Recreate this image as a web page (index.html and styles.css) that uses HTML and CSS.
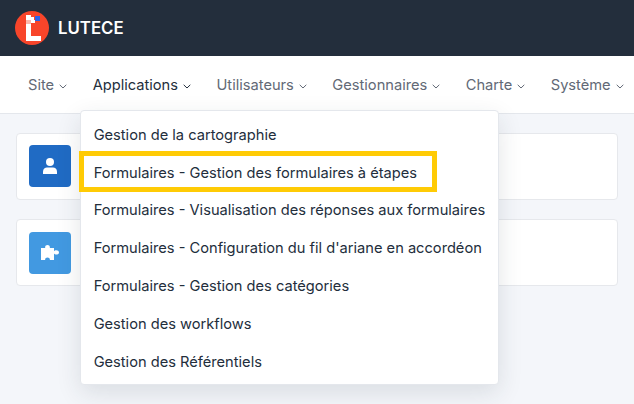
FILE: index.html
```html
<!DOCTYPE html>
<html lang="fr">
<head>
<meta charset="utf-8">
<title>Lutece</title>
<link rel="stylesheet" href="styles.css">
</head>
<body>
<header class="topbar">
  <svg class="logo" viewBox="0 0 34 34" width="34" height="34" aria-hidden="true">
    <circle cx="17" cy="17" r="17" fill="#f8452a"/>
    <path d="M11 4h5v5h-5zM16 6h3v3h-3zM16 9h4v3h-4zM11 13h5v12h10v5H11z" fill="#fff"/>
    <path d="M11 9h5v4h-5z" fill="#fbb9ad"/>
    <path d="M20 5h5v5h-5z" fill="#2b63e8"/>
  </svg>
  <span class="brand">LUTECE</span>
</header>
<nav class="nav">
  <a class="nav-item">Site<svg class="caret" viewBox="0 0 8 5"><path d="M.7.8 4 4l3.300-3.200"/></svg></a>
  <div class="nav-group">
    <a class="nav-item active">Applications<svg class="caret" viewBox="0 0 8 5"><path d="M.7.8 4 4l3.300-3.200"/></svg></a>
    <div class="menu">
      <a class="menu-item">Gestion de la cartographie</a>
      <a class="menu-item">Formulaires - Gestion des formulaires à étapes</a>
      <a class="menu-item">Formulaires - Visualisation des réponses aux formulaires</a>
      <a class="menu-item">Formulaires - Configuration du fil d'ariane en accordéon</a>
      <a class="menu-item">Formulaires - Gestion des catégories</a>
      <a class="menu-item">Gestion des workflows</a>
      <a class="menu-item">Gestion des Référentiels</a>
      <div class="highlight"></div>
    </div>
  </div>
  <a class="nav-item">Utilisateurs<svg class="caret" viewBox="0 0 8 5"><path d="M.7.8 4 4l3.300-3.200"/></svg></a>
  <a class="nav-item">Gestionnaires<svg class="caret" viewBox="0 0 8 5"><path d="M.7.8 4 4l3.300-3.200"/></svg></a>
  <a class="nav-item">Charte<svg class="caret" viewBox="0 0 8 5"><path d="M.7.8 4 4l3.300-3.200"/></svg></a>
  <a class="nav-item">Système<svg class="caret" viewBox="0 0 8 5"><path d="M.7.8 4 4l3.300-3.200"/></svg></a>
</nav>
<main class="main">
  <section class="card">
    <div class="tile tile-dark">
      <svg viewBox="0 0 14 16" width="14" height="16" aria-hidden="true"><circle cx="7" cy="4" r="4" fill="#fff"/><path d="M0 16v-2.500C0 10.700 2 9.500 4 9.500h6c2 0 4 1.200 4 4V16z" fill="#fff"/></svg>
    </div>
  </section>
  <section class="card">
    <div class="tile tile-light">
      <svg viewBox="0 0 18 15" width="18" height="15" aria-hidden="true"><path d="M0 3h4.200C3.800 1 5 0 6.500 0S9.200 1 8.800 3H13v3.300c.6-.8 1.300-1.100 2.200-1.100 1.600 0 2.800.9 2.800 2.200s-1.200 2.200-2.800 2.200c-.9 0-1.600-.3-2.200-1.100V15H8.800c.4-1.600-.8-2.600-2.300-2.600s-2.700 1-2.300 2.600H0z" fill="#fff"/></svg>
    </div>
  </section>
</main>
</body>
</html>
```
FILE: styles.css
```css
* { box-sizing: border-box; }
html, body { margin: 0; height: 100%; }
body {
  background: #f4f6fa;
  font-family: Inter, "Liberation Sans", sans-serif;
  font-size: 14.650px;
  color: #232e3c;
  overflow: hidden;
}
.topbar {
  height: 56px;
  background: #232e3c;
  display: flex;
  align-items: center;
  padding-left: 15px;
  gap: 9px;
}
.logo { flex: none; }
.brand { color: #fff; font-weight: 600; font-size: 16.800px; }
.nav {
  height: 58px;
  background: #fff;
  border-bottom: 1px solid #e4e7ec;
  display: flex;
  align-items: center;
  padding-left: 28px;
  gap: 25.500px;
  white-space: nowrap;
}
.nav-item {
  color: #626976;
  display: flex;
  align-items: center;
  gap: 5px;
}
.nav-item.active { color: #232e3c; }
.nav-group { position: relative; }
.caret {
  width: 8px;
  height: 5px;
  margin-top: 3px;
  fill: none;
  stroke: currentColor;
  stroke-width: 1;
}
.menu {
  position: absolute;
  left: -12.500px;
  top: 34px;
  width: 419px;
  height: 275px;
  padding: 5.500px 0;
  background: #fff;
  border: 1px solid #e4e7ec;
  border-radius: 4px;
  box-shadow: 0 8px 24px rgba(35, 46, 60, 0.12);
  z-index: 2;
  display: flex;
  flex-direction: column;
}
.menu-item {
  height: 37.800px;
  display: flex;
  align-items: center;
  padding-left: 12.500px;
  flex: none;
}
.highlight {
  position: absolute;
  left: -2px;
  top: 40px;
  width: 358px;
  height: 41px;
  border: 5px solid #ffcb05;
}
.main {
  padding: 18.600px 16px;
  display: flex;
  flex-direction: column;
  gap: 18.600px;
}
.card {
  height: 67.600px;
  background: #fff;
  border: 1px solid #e6e8ec;
  border-radius: 4px;
  padding: 0 12px;
  display: flex;
  align-items: center;
}
.tile {
  width: 42px;
  height: 42px;
  border-radius: 4px;
  display: flex;
  align-items: center;
  justify-content: center;
}
.tile-dark { background: #206bc4; }
.tile-light { background: #4299e1; }
```
